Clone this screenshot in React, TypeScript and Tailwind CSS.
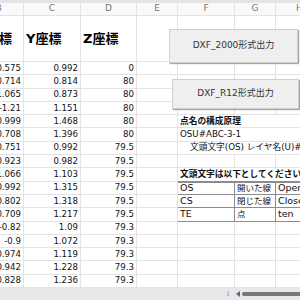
import React from 'react';

const font = { fontFamily: '"DejaVu Sans", "Noto Sans CJK JP", sans-serif' };

// grid line colour and table border colour
const GL = 'border-[#e3e3e3]';
const TB = 'border-[#8c8c8c]';

const rows = [
  ['-0.575', '0.992', '0'],
  ['-0.714', '0.814', '80'],
  ['-1.065', '0.873', '80'],
  ['-1.21', '1.151', '80'],
  ['-0.999', '1.468', '80'],
  ['-0.708', '1.396', '80'],
  ['-0.751', '0.992', '79.5'],
  ['-0.923', '0.982', '79.5'],
  ['-1.066', '1.103', '79.5'],
  ['-0.992', '1.315', '79.5'],
  ['-0.802', '1.318', '79.5'],
  ['-0.709', '1.217', '79.5'],
  ['-0.82', '1.09', '79.3'],
  ['-0.9', '1.072', '79.3'],
  ['-0.974', '1.119', '79.3'],
  ['-0.942', '1.228', '79.3'],
  ['-0.828', '1.236', '79.3'],
];

const table: Record<number, [string, string, string]> = {
  9: ['OS', '開いた線', 'Open'],
  10: ['CS', '閉じた線', 'Close'],
  11: ['TE', '点', 'ten'],
};

const notes: Record<number, { text: string; bold?: boolean; indent?: boolean }> = {
  4: { text: '点名の構成原理', bold: true },
  5: { text: 'OSU#ABC-3-1' },
  6: { text: '文頭文字(OS) レイヤ名(U)#点番号', indent: true },
  8: { text: '文頭文字は以下としてください', bold: true },
};

const Num: React.FC<{ w: string; v: string }> = ({ w, v }) => (
  <div className={`${w} shrink-0 h-full border-r border-b ${GL} flex items-center justify-end pr-[2px] whitespace-nowrap overflow-hidden`}>
    {v}
  </div>
);

const DataRow: React.FC<{ i: number; r: string[] }> = ({ i, r }) => {
  const t = table[i];
  const n = notes[i];
  return (
    <div className="flex h-[13.3px] text-[8.6px] text-[#111]">
      <Num w="w-[50px]" v={r[0]} />
      <Num w="w-[57px]" v={r[1]} />
      <Num w="w-[56px]" v={r[2]} />
      <div className={`w-[41px] shrink-0 h-full border-b ${GL} border-r ${t ? TB : GL}`} />
      {t ? (
        <>
          <div className={`w-[57px] shrink-0 h-full border-r border-b ${TB} ${i === 9 ? 'border-t' : ''} flex items-center pl-[2px] text-[9.5px]`}>{t[0]}</div>
          <div className={`w-[41px] shrink-0 h-full border-r border-b ${TB} ${i === 9 ? 'border-t' : ''} flex items-center pl-[2px] text-[8.5px] whitespace-nowrap overflow-hidden`}>{t[1]}</div>
          <div className={`w-[48px] shrink-0 h-full border-r border-b ${TB} ${i === 9 ? 'border-t' : ''} flex items-center pl-[2px] text-[9.5px]`}>{t[2]}</div>
        </>
      ) : n ? (
        <div
          className={`w-[146px] shrink-0 h-full border-b ${i === 8 ? TB : GL} flex items-center whitespace-nowrap text-[8.7px] ${n.bold ? 'font-bold' : ''} ${n.indent ? 'pl-[12px]' : 'pl-[2px]'}`}
        >
          {n.text}
        </div>
      ) : (
        <>
          <div className={`w-[57px] shrink-0 h-full border-r border-b ${GL}`} />
          <div className={`w-[41px] shrink-0 h-full border-r border-b ${GL}`} />
          <div className={`w-[48px] shrink-0 h-full border-r border-b ${GL}`} />
        </>
      )}
    </div>
  );
};

const SheetButton: React.FC<{ label: string; cls: string }> = ({ label, cls }) => (
  <div
    className={`absolute ${cls} bg-[#efefef] border border-[#cfcfcf] shadow-[1px_1px_1px_rgba(0,0,0,0.35)] flex items-center justify-center text-[9px] text-[#333]`}
  >
    {label}
  </div>
);

export default function App() {
  const cols = [
    ['w-[50px]', 'B'],
    ['w-[57px]', 'C'],
    ['w-[56px]', 'D'],
    ['w-[41px]', 'E'],
    ['w-[57px]', 'F'],
    ['w-[41px]', 'G'],
    ['w-[48px]', 'H'],
  ];

  return (
    <div className="relative w-[300px] h-[300px] overflow-hidden bg-white flex flex-col" style={font}>
      <div className="-ml-[26px] flex flex-col">
        {/* column letters */}
        <div className="flex h-[16px] border-t-[3px] border-[#e4e4e4] bg-[#f9f9f9]">
          {cols.map(([w, l]) => (
            <div key={l} className={`${w} shrink-0 h-full border-r border-b ${GL} flex items-center justify-center text-[9px] text-[#777]`}>
              {l}
            </div>
          ))}
        </div>

        {/* labels row */}
        <div className="flex h-[46px] text-[13px] font-bold text-black">
          <div className={`w-[50px] shrink-0 h-full border-r border-b ${GL} flex items-center pl-[2px]`}>X座標</div>
          <div className={`w-[57px] shrink-0 h-full border-r border-b ${GL} flex items-center pl-[2px]`}>Y座標</div>
          <div className={`w-[56px] shrink-0 h-full border-r border-b ${GL} flex items-center pl-[2px]`}>Z座標</div>
          <div className={`w-[41px] shrink-0 h-full border-r border-b ${GL}`} />
          <div className={`w-[57px] shrink-0 h-full border-r border-b ${GL}`} />
          <div className={`w-[41px] shrink-0 h-full border-r border-b ${GL}`} />
          <div className={`w-[48px] shrink-0 h-full border-r border-b ${GL}`} />
        </div>

        {rows.map((r, i) => (
          <DataRow key={i} i={i} r={r} />
        ))}
      </div>

      {/* sheet tab / scroll bar strip */}
      <div className="flex-1 bg-[#e7e8ea] flex items-center pl-[227px]">
        <span className="text-[7px] leading-none text-[#666]">⁞</span>
        <span className="ml-[7px] w-0 h-0 border-y-[3px] border-y-transparent border-r-[4px] border-r-[#666]" />
        <span className="ml-[2px] flex-1 h-[4px] rounded-l-full bg-[#777]" />
      </div>

      <SheetButton label="DXF_2000形式出力" cls="left-[169px] top-[29px] w-[129px] h-[34px]" />
      <SheetButton label="DXF_R12形式出力" cls="left-[172px] top-[79px] w-[127px] h-[30px]" />
    </div>
  );
}
